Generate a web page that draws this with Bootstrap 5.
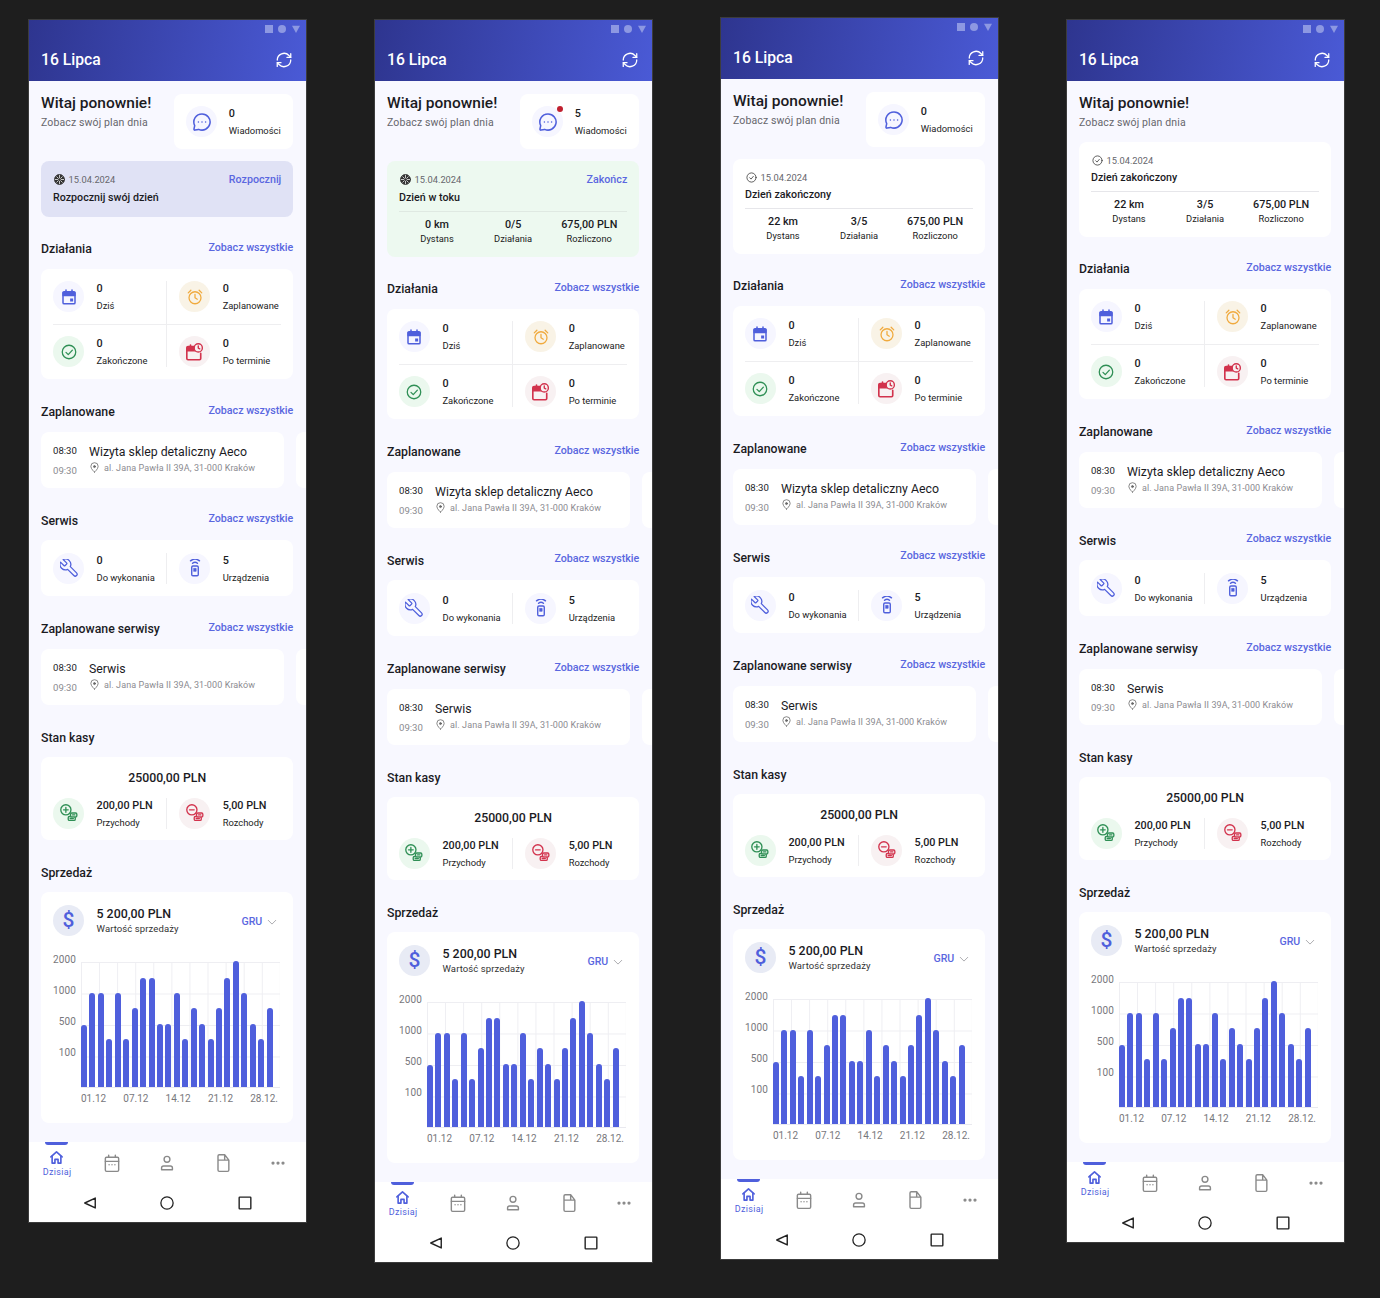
<!DOCTYPE html>
<html lang="pl"><head><meta charset="utf-8"><title>16 Lipca</title>
<link href="https://cdn.jsdelivr.net/npm/bootstrap@5.3.0/dist/css/bootstrap.min.css" rel="stylesheet">
<style>
html,body{height:1298px;overflow:hidden}
body{background:#1e1e1e;font-family:Roboto,"Liberation Sans",sans-serif;color:#1b1b1f}
.desk{padding:20px 0 0 29px;gap:69.3px}
.phone{width:276.7px;flex:none;background:#f8f8ff;box-shadow:0 0 0 1px #3c3c3c;overflow:hidden}
.phone-up{margin-top:-2px}
.topbar{height:61px;background:linear-gradient(100deg,#2e358f 0%,#4a5ad6 100%);color:#fff;padding:0 13px 0 12px;position:relative}
.sbar{height:9px;top:5px;right:6px;position:absolute;gap:5.500px;color:#8d98e2}
.sbar svg{display:block;width:8px;height:8px}
.ttl{font-size:15.700px;font-weight:500;padding-top:29.500px;line-height:20px}
.sync{width:18px;height:18px;margin-top:31px}
.sync svg{display:block}
.pagebody{padding:13px 12.400px 19px 12px}
.wlc{font-size:15.500px;font-weight:500;line-height:18px}
.wlc-sub{font-size:10.500px;color:#66666c;line-height:14px;margin-top:4px;letter-spacing:.13px}
.tile{background:#fff;border-radius:8px}
.msg{width:119.500px;height:55px;padding:12px 12px 12px 12.500px;gap:11.500px}
.dot{width:31px;height:31px;border-radius:50%;flex:none;position:relative}
.dot svg{width:18px;height:18px}
.d-blue{background:#f6f6ff;color:#4f5fdc}.d-org{background:#f9f3e6;color:#f0aa3e}.d-grn{background:#ebf8ee;color:#2f8f55}.d-red{background:#f8f1f2;color:#d2334d}.d-usd{background:#e8ebf5;color:#4f5fdc}
.alert-dot{position:absolute;width:6px;height:6px;border-radius:50%;background:#c0202f;right:0;top:0}
.num{font-size:10.800px;font-weight:500;line-height:14px;margin-top:1px}
.lbl{font-size:9.400px;line-height:13px;margin-top:3px;color:#222;white-space:nowrap}
.daybox{margin-top:12px;padding:12px;border-radius:8px;font-size:9.300px;background:#fff}
.day-idle{background:#e0e2f5}.day-run{background:#edf9f0}
.dt{color:#66666c;line-height:13px;gap:4px}
.dt svg{width:11px;height:11px;color:#333;margin-left:.600px}
.lnk{color:#5a67e0;font-size:10.700px;font-weight:500;text-decoration:none;line-height:14px}
.head .lnk{margin-bottom:2px}
.dname{font-size:10.700px;font-weight:500;line-height:14px;margin-top:3.500px}
.dstats{border-top:1px solid #dfe9e2;margin-top:6px;padding-top:6px;text-align:center}
.day-done .dstats{border-color:#e6e6ea}
.dstats .col-4{padding:0}
.dv{font-size:10.800px;font-weight:500;line-height:14px}
.dk{font-size:9.300px;line-height:13px;color:#222}
.head{margin-top:22.600px;height:20px;margin-bottom:10px}
.hx{font-size:12.300px;font-weight:500;padding-top:1px}
.quad{padding:12px;display:grid;grid-template-columns:minmax(0,1fr) minmax(0,1fr)}
.quad-one{padding:12.400px 12px}
.cellx{gap:12.500px}
.cell-r{padding-left:12px}
.cell-l{border-right:1px solid #eeeef0}
.cell-t{padding-bottom:11.500px;border-bottom:1px solid #eeeef0}
.cell-b{padding-top:11.500px}
.trk{gap:12px;margin-right:-12.400px;overflow:hidden}
.sched{width:243px;height:56px;flex:none;padding:12px}
.sched-next{width:60px;height:56px;flex:none}
.tm{width:36px;font-size:9.600px;line-height:13px;flex:none}
.tm div+div{color:#8b8b90;margin-top:7px}
.st{font-size:12.300px;line-height:14px;margin-top:1px;white-space:nowrap}
.ad{font-size:9px;color:#8b8b90;line-height:12px;margin-top:3px;gap:4px;white-space:nowrap;letter-spacing:.1px}
.ad svg{width:11px;height:11px;color:#666;flex:none}
.kasa{padding:12.500px 12px 11px}
.ktot{font-size:12.300px;font-weight:500;line-height:16px;text-align:center;margin-bottom:12px}
.kcell{display:grid;grid-template-columns:minmax(0,1fr) minmax(0,1fr)}
.sales{padding:12.500px 12px;height:230.500px}
.usd{font-size:21px;font-weight:500;line-height:1}
.sv{font-size:12.400px;font-weight:500;line-height:16px}
.sk{font-size:9.500px;line-height:13px;letter-spacing:.1px;color:#333}
.sinfo{margin-left:12.500px;padding-top:1px}
.gru{color:#5a67e0;font-size:10.600px;font-weight:500;gap:5px;margin:3px 4px 0 0}
.gru svg{width:10px;height:10px;color:#8b8b90}
.chart{margin-top:17px}
.ylab{width:23px;margin-right:5px;text-align:right;font-size:10px;line-height:14px;color:#77777c;gap:17px;letter-spacing:.1px}
.plot{width:199px;height:126px;margin-top:9px;border-bottom:1px solid #e9e9ef;background-image:linear-gradient(#eeeef2 1px,transparent 1px),linear-gradient(90deg,#eeeef2 1px,transparent 1px);background-size:18.090px 31.500px;gap:2.450px}
.bar{width:6px;background:#4f5fdc;border-radius:3px 3px 0 0;flex:none}
.xlab{margin:4.500px 0 0 28px;width:197px;font-size:10px;line-height:14px;color:#77777c}
.tabs{background:#fff;height:80.300px}
.tabrow{height:42px}
.tabi{width:20%;position:relative;text-align:center;color:#8a8a8a;padding-top:11.500px}
.tabi svg{width:20px;height:20px;display:block;margin:0 auto}
.tab-on{color:#4f5fdc;padding-top:8px}
.tab-on svg{width:15px;height:15px}
.tab-on::before{content:"";position:absolute;top:0;left:16px;width:23px;height:3px;background:#4f5fdc;border-radius:0 0 3px 3px}
.tabt{font-size:9px;line-height:12px;margin-top:1.500px;letter-spacing:.35px;padding-left:1px}
.andr{height:38.300px;color:#222}
.andr div{width:77.500px}
.andr svg{width:14px;height:14px;display:block;margin:auto}
</style></head>
<body>
<div id="desk" class="desk d-flex align-items-start"></div>
<script src="https://cdn.jsdelivr.net/npm/bootstrap@5.3.0/dist/js/bootstrap.bundle.min.js"></script>
<script>
const sv=(b,vb='0 0 24 24',x='')=>`<svg viewBox="${vb}" fill="none" stroke="currentColor" stroke-width="1.7" stroke-linecap="round" stroke-linejoin="round" ${x}>${b}</svg>`;
const I={
sync:sv('<path d="M3 12a9 9 0 0 1 15.6-6L21 8.500"/><path d="M21 3.500v5h-5"/><path d="M21 12a9 9 0 0 1-15.600 6L3 15.500"/><path d="M3 20.500v-5h5"/>'),
msg:sv('<path d="M12 3a9 9 0 1 1-3.700 17.200L4.300 21a1 1 0 0 1-1.200-1.200l.8-3.800A9 9 0 0 1 12 3z"/><path d="M8 12h.01M12 12h.01M16 12h.01"/>','2 2 20 20'),
cal:sv('<rect x="4" y="5" width="16" height="16" rx="1.500" stroke-width="2"/><path d="M4 6h16v4H4z" fill="currentColor"/><path d="M8 2.500v3M16 2.500v3" stroke-width="2"/><rect x="13.500" y="14" width="4" height="4" fill="currentColor" stroke="none"/>'),
alarm:sv('<circle cx="12" cy="13" r="8"/><path d="M12 8.500V13l3 2M3 6.500 6.500 3M21 6.500 17.500 3"/>'),
chk:sv('<circle cx="12" cy="12" r="9"/><path d="m8 12.500 3 3 5.500-6"/>'),
late:sv('<path d="M14 6H4.500A1.500 1.500 0 0 0 3 7.500v13A1.500 1.500 0 0 0 4.500 22h14a1.500 1.500 0 0 0 1.500-1.500V14" stroke-width="2"/><path d="M3.500 7h10.500v4H3.500z" fill="currentColor"/><path d="M7.500 4v3" stroke-width="2"/><circle cx="17" cy="7.500" r="5" fill="#f8f1f2" stroke-width="1.700"/><path d="M17 5v2.700l1.800 1"/>','2 1.500 22 22'),
wrench:sv('<g transform="translate(24 0) scale(-1 1)"><path d="M14.700 6.300a1 1 0 0 0 0 1.400l1.600 1.600a1 1 0 0 0 1.400 0l3.770-3.770a6 6 0 0 1-7.940 7.940l-6.910 6.910a2.120 2.120 0 0 1-3-3l6.910-6.910a6 6 0 0 1 7.940-7.940l-3.760 3.760z"/></g>','2 2 20 20','style="stroke-width:1.400"'),
rem:sv('<rect x="8" y="10" width="8" height="12" rx="1.500"/><rect x="10.600" y="13" width="2.800" height="3.500" fill="currentColor" stroke-width=".8"/><path d="M9 6.800a4.500 4.500 0 0 1 6 0M6.500 3.800a8.500 8.500 0 0 1 11 0"/>','1 1.500 22 22'),
inc:sv('<circle cx="8.500" cy="8.500" r="6.500"/><path d="M8.500 5.500v6M5.500 8.500h6"/><rect x="11.500" y="17" width="9" height="5" rx="1.500" fill="#ebf8ee"/><rect x="14.500" y="12.500" width="8" height="5" rx="1.500" fill="#ebf8ee"/><path d="M14 19.500h4M17 15h3"/>','1 1 23 23'),
exp:sv('<circle cx="8.500" cy="8.500" r="6.500"/><path d="M5.500 8.500h6"/><rect x="11.500" y="17" width="9" height="5" rx="1.500" fill="#f8f1f2"/><rect x="14.500" y="12.500" width="8" height="5" rx="1.500" fill="#f8f1f2"/><path d="M14 19.500h4M17 15h3"/>','1 1 23 23'),
pin:sv('<path d="M12 22s-8-6.500-8-12.500a8 8 0 0 1 16 0C20 15.500 12 22 12 22z"/><circle cx="12" cy="10" r="2.200" fill="currentColor"/>'),
wheel:sv('<circle cx="12" cy="12" r="11" fill="currentColor"/><path d="M12 3v18M3 12h18M6 6l12 12M18 6 6 18" stroke="#fff" stroke-width="1.600"/><circle cx="12" cy="12" r="3" fill="currentColor" stroke="none"/>'),
ok:sv('<circle cx="12" cy="12" r="10"/><path d="m8 12.500 3 3 5-6"/>'),
down:sv('<path d="m3 8 9 9 9-9"/>'),
home:sv('<path d="M3 11 12 3l9 8"/><path d="M5 10v11h4.500v-6h5v6H19V10"/>','0 0 24 24','style="stroke-width:2.600"'),
ccal:sv('<rect x="4" y="5" width="16" height="17" rx="1.500"/><path d="M4 10h16M8 2.500V5M16 2.500V5M8.500 14h.01M12 14h.01M15.500 14h.01"/>'),
user:sv('<circle cx="12" cy="7.500" r="3.500"/><path d="M5.500 20v-2a2.500 2.500 0 0 1 2.500-2.500h8a2.500 2.500 0 0 1 2.500 2.500v2z"/>'),
doc:sv('<path d="M6 3.500A1.500 1.500 0 0 1 7.500 2H14l5 6.500v12a1.500 1.500 0 0 1-1.500 1.500h-10A1.500 1.500 0 0 1 6 20.500zM6 8.500h13M14 2v6.500"/>'),
more:sv('<circle cx="6" cy="12" r="1.100" fill="currentColor"/><circle cx="12" cy="12" r="1.100" fill="currentColor"/><circle cx="18" cy="12" r="1.100" fill="currentColor"/>'),
back:sv('<path d="M21 3.500 3 12l18 8.500z" stroke-width="2.400"/>'),
circ:sv('<circle cx="12" cy="12" r="10.500" stroke-width="2.200"/>'),
sq:sv('<rect x="2" y="2" width="20" height="20" rx="1" stroke-width="2.400"/>')
};
const dot=(c,i,a='')=>`<div class="dot ${c} d-flex align-items-center justify-content-center">${I[i]}${a}</div>`;
const cell=(c,i,n,l,x='')=>`<div class="cellx d-flex ${x}">${dot(c,i)}<div><div class="num">${n}</div><div class="lbl">${l}</div></div></div>`;
const head=(t,l=1)=>`<div class="head d-flex justify-content-between align-items-center"><div class="hx">${t}</div>${l?'<a class="lnk" href="#">Zobacz wszystkie</a>':''}</div>`;
const sched=t=>`<div class="trk d-flex"><div class="tile sched d-flex"><div class="tm"><div>08:30</div><div>09:30</div></div><div><div class="st">${t}</div><div class="ad d-flex align-items-center">${I.pin}<span>al. Jana Pawła II 39A, 31-000 Kraków</span></div></div></div><div class="tile sched-next"></div></div>`;
const H=[62,94,94,48,94,48,79,109,109,63,63,94,48,79,63,48,79,109,126,94,63,48,79];
const bars=H.map(h=>`<div class="bar" style="height:${h}px"></div>`).join('');
const stats=(a,b)=>`<div class="dstats row g-0"><div class="col-4"><div class="dv">${a}</div><div class="dk">Dystans</div></div><div class="col-4"><div class="dv">${b}</div><div class="dk">Działania</div></div><div class="col-4"><div class="dv">675,00 PLN</div><div class="dk">Rozliczono</div></div></div>`;
function phone(o){
const top=`<div class="d-flex justify-content-between align-items-start"><div class="dt d-flex align-items-center">${o.s=='done'?I.ok:I.wheel}<span>15.04.2024</span></div>${o.act?`<a class="lnk" href="#">${o.act}</a>`:''}</div><div class="dname">${o.name}</div>`;
return `<div class="phone ${o.up?'phone-up':''}">
<div class="topbar d-flex justify-content-between"><div class="sbar d-flex">${sv('<rect width="24" height="24" fill="currentColor" stroke="none"/>')}${sv('<circle cx="12" cy="12" r="12" fill="currentColor" stroke="none"/>')}${sv('<path d="M0 2h24L12 24z" fill="currentColor" stroke="none"/>')}</div><div class="ttl">16 Lipca</div><div class="sync">${I.sync}</div></div>
<div class="pagebody">
<div class="d-flex justify-content-between"><div><div class="wlc">Witaj ponownie!</div><div class="wlc-sub">Zobacz swój plan dnia</div></div>${o.msg!==undefined?`<div class="tile msg d-flex">${dot('d-blue','msg',o.msg?'<span class="alert-dot"></span>':'')}<div><div class="num">${o.msg}</div><div class="lbl">Wiadomości</div></div></div>`:''}</div>
<div class="daybox day-${o.s}">${top}${o.st?stats(...o.st):''}</div>
${head('Działania')}
<div class="tile quad">${cell('d-blue','cal',0,'Dziś','cell-l cell-t')}${cell('d-org','alarm',0,'Zaplanowane','cell-r cell-t')}${cell('d-grn','chk',0,'Zakończone','cell-l cell-b')}${cell('d-red','late',0,'Po terminie','cell-r cell-b')}</div>
${head('Zaplanowane')}${sched('Wizyta sklep detaliczny Aeco')}
${head('Serwis')}
<div class="tile quad quad-one">${cell('d-blue','wrench',0,'Do wykonania','cell-l')}${cell('d-blue','rem',5,'Urządzenia','cell-r')}</div>
${head('Zaplanowane serwisy')}${sched('Serwis')}
${head('Stan kasy',0)}
<div class="tile kasa"><div class="ktot">25000,00 PLN</div><div class="kcell">${cell('d-grn','inc','200,00 PLN','Przychody','cell-l')}${cell('d-red','exp','5,00 PLN','Rozchody','cell-r')}</div></div>
${head('Sprzedaż',0)}
<div class="tile sales"><div class="d-flex"><div class="dot d-usd d-flex align-items-center justify-content-center usd">$</div><div class="sinfo flex-grow-1"><div class="sv">5 200,00 PLN</div><div class="sk">Wartość sprzedaży</div></div><div class="gru d-flex align-items-center">GRU ${I.down}</div></div>
<div class="chart d-flex"><div class="ylab d-flex flex-column"><div>2000</div><div>1000</div><div>500</div><div>100</div></div><div class="plot d-flex align-items-end">${bars}</div></div>
<div class="xlab d-flex justify-content-between"><span>01.12</span><span>07.12</span><span>14.12</span><span>21.12</span><span>28.12.</span></div></div>
</div>
<div class="tabs"><div class="tabrow d-flex"><div class="tabi tab-on">${I.home}<div class="tabt">Dzisiaj</div></div><div class="tabi">${I.ccal}</div><div class="tabi">${I.user}</div><div class="tabi">${I.doc}</div><div class="tabi">${I.more}</div></div>
<div class="andr d-flex justify-content-center align-items-center"><div>${I.back}</div><div>${I.circ}</div><div>${I.sq}</div></div></div>
</div>`;}
document.getElementById('desk').innerHTML=[
phone({s:'idle',msg:0,act:'Rozpocznij',name:'Rozpocznij swój dzień'}),
phone({s:'run',msg:5,act:'Zakończ',name:'Dzień w toku',st:['0 km','0/5']}),
phone({s:'done',msg:0,up:1,name:'Dzień zakończony',st:['22 km','3/5']}),
phone({s:'done',name:'Dzień zakończony',st:['22 km','3/5']})].join('');
</script>
</body></html>
